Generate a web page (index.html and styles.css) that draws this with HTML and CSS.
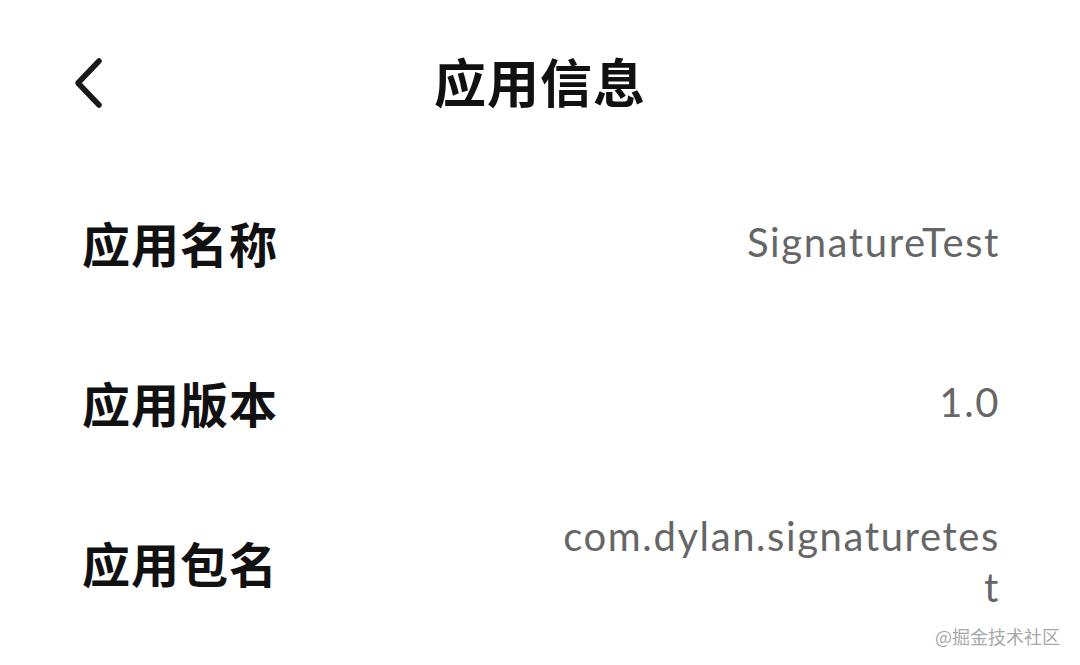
FILE: index.html
```html
<!DOCTYPE html>
<html lang="zh-CN">
<head>
<meta charset="utf-8">
<link rel="stylesheet" href="styles.css">
</head>
<body>
<div class="page">
  <header class="topbar">
    <div class="back">
      <svg width="40" height="60" viewBox="0 0 40 60">
        <path d="M29 5 L8 27 L29 49" fill="none" stroke="#1a1a1a" stroke-width="5.5" stroke-linecap="round" stroke-linejoin="round"/>
      </svg>
    </div>
    <h1 class="title">应用信息</h1>
  </header>
  <div class="row">
    <div class="label">应用名称</div>
    <div class="value">SignatureTest</div>
  </div>
  <div class="row">
    <div class="label">应用版本</div>
    <div class="value">1.0</div>
  </div>
  <div class="row">
    <div class="label">应用包名</div>
    <div class="value">com.dylan.signaturetes<br>t</div>
  </div>
  <div class="watermark">@掘金技术社区</div>
</div>
</body>
</html>
```
FILE: styles.css
```css
html, body {
  margin: 0;
  padding: 0;
  background: #ffffff;
}
.page {
  position: relative;
  width: 1080px;
  height: 665px;
  overflow: hidden;
  font-family: "Noto Sans CJK SC", "Noto Sans", sans-serif;
}
.topbar {
  position: relative;
  height: 162px;
  display: flex;
  align-items: center;
  justify-content: center;
}
.back {
  position: absolute;
  left: 70px;
  top: 56px;
  width: 40px;
  height: 60px;
}
.title {
  margin: 0;
  font-size: 52px;
  font-weight: 700;
  color: #111;
  line-height: 1;
  letter-spacing: 1px;
}
.row {
  height: 160px;
  display: flex;
  align-items: center;
  justify-content: space-between;
  padding: 0 80px 0 82px;
}
.label {
  font-size: 48px;
  font-weight: 700;
  color: #111;
  line-height: 1;
  letter-spacing: 1px;
}
.value {
  font-family: Lato, "Open Sans", sans-serif;
  font-size: 40px;
  letter-spacing: 1.6px;
  color: #666;
  text-align: right;
  line-height: 51px;
}
.watermark {
  position: absolute;
  right: 20px;
  bottom: 16px;
  font-size: 18px;
  color: #a8a8a8;
}
```
